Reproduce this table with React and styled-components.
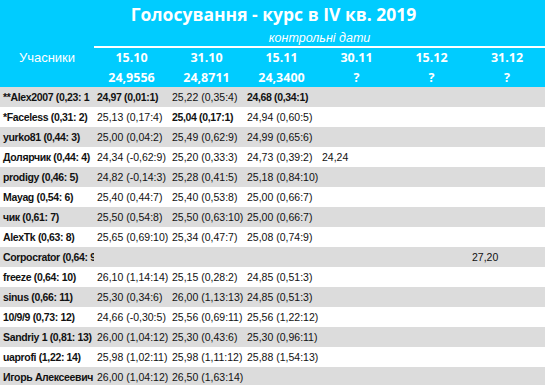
import React from "react";
import styled, { createGlobalStyle } from "styled-components";

const GlobalStyle = createGlobalStyle`
  body {
    margin: 0;
    background: #ffffff;
    font-family: "Liberation Sans", Arial, sans-serif;
  }
`;

const COLS = "94px repeat(5, 75px) 76px";

const Sheet = styled.div`
  width: 545px;
  height: 385px;
  overflow: hidden;
`;

const Header = styled.header`
  background: #00ccff;
  color: #ffffff;
`;

const Title = styled.h1`
  margin: 0;
  height: 28px;
  box-sizing: border-box;
  padding: 2px 0 0 2px;
  text-align: center;
  font-family: "Open Sans", sans-serif;
  font-weight: 700;
  font-size: 17.5px;
  line-height: 24px;
`;

const SubRow = styled.div`
  display: grid;
  grid-template-columns: 94px 1fr;
  height: 20px;
`;

const SubCaption = styled.div`
  border-bottom: 2px solid #ffffff;
  text-align: center;
  font-style: italic;
  font-size: 12.5px;
  line-height: 16px;
  padding-top: 2px;
`;

const HeadRow = styled.div`
  display: grid;
  grid-template-columns: ${COLS};
  height: ${(p) => p.$h}px;
  align-items: center;
`;

const HeadCell = styled.div`
  text-align: center;
  font-weight: ${(p) => (p.$regular ? 400 : 700)};
  font-size: ${(p) => (p.$regular ? 13 : 12.5)}px;
  font-family: ${(p) => (p.$regular ? '"Liberation Sans"' : '"Open Sans"')}, sans-serif;
`;

const Row = styled.div`
  display: grid;
  grid-template-columns: ${COLS};
  height: 20px;
  align-items: center;
  background: ${(p) => (p.$odd ? "#dcdcdc" : "#ffffff")};
`;

const Cell = styled.div`
  padding-left: 3px;
  white-space: nowrap;
  overflow: hidden;
  font-size: 10.5px;
  color: #111111;
  font-weight: ${(p) => (p.$bold ? 700 : 400)};
  letter-spacing: ${(p) => (p.$bold ? "-0.35px" : "0")};
`;

const dates = ["15.10", "31.10", "15.11", "30.11", "15.12", "31.12"];
const rates = ["24,9556", "24,8711", "24,3400", "?", "?", "?"];

// cells prefixed with "!" are the best guess of a column
const rows = [
  ["**Alex2007 (0,23: 1", "!24,97 (0,01:1)", "25,22 (0,35:4)", "!24,68 (0,34:1)"],
  ["*Faceless (0,31: 2)", "25,13 (0,17:4)", "!25,04 (0,17:1)", "24,94 (0,60:5)"],
  ["yurko81 (0,44: 3)", "25,00 (0,04:2)", "25,49 (0,62:9)", "24,99 (0,65:6)"],
  ["Долярчик (0,44: 4)", "24,34 (-0,62:9)", "25,20 (0,33:3)", "24,73 (0,39:2)", "24,24"],
  ["prodigy (0,46: 5)", "24,82 (-0,14:3)", "25,28 (0,41:5)", "25,18 (0,84:10)"],
  ["Mayag (0,54: 6)", "25,40 (0,44:7)", "25,40 (0,53:8)", "25,00 (0,66:7)"],
  ["чик (0,61: 7)", "25,50 (0,54:8)", "25,50 (0,63:10)", "25,00 (0,66:7)"],
  ["AlexTk (0,63: 8)", "25,65 (0,69:10)", "25,34 (0,47:7)", "25,08 (0,74:9)"],
  ["Corpocrator (0,64: 9", "", "", "", "", "", "27,20"],
  ["freeze (0,64: 10)", "26,10 (1,14:14)", "25,15 (0,28:2)", "24,85 (0,51:3)"],
  ["sinus (0,66: 11)", "25,30 (0,34:6)", "26,00 (1,13:13)", "24,85 (0,51:3)"],
  ["10/9/9 (0,73: 12)", "24,66 (-0,30:5)", "25,56 (0,69:11)", "25,56 (1,22:12)"],
  ["Sandriy 1 (0,81: 13)", "26,00 (1,04:12)", "25,30 (0,43:6)", "25,30 (0,96:11)"],
  ["uaprofi (1,22: 14)", "25,98 (1,02:11)", "25,98 (1,11:12)", "25,88 (1,54:13)"],
  ["Игорь Алексеевич (", "26,00 (1,04:12)", "26,50 (1,63:14)"],
];

export default function App() {
  return (
    <>
      <GlobalStyle />
      <Sheet>
        <Header>
          <Title>Голосування - курс в IV кв. 2019</Title>
          <SubRow>
            <div />
            <SubCaption>контрольні дати</SubCaption>
          </SubRow>
          <HeadRow $h={19}>
            <HeadCell $regular>Учасники</HeadCell>
            {dates.map((d) => (
              <HeadCell key={d}>{d}</HeadCell>
            ))}
          </HeadRow>
          <HeadRow $h={20}>
            <div />
            {rates.map((r, i) => (
              <HeadCell key={i}>{r}</HeadCell>
            ))}
          </HeadRow>
        </Header>
        {rows.map((r, i) => {
          const cells = [...r];
          while (cells.length < 7) cells.push("");
          return (
            <Row key={i} $odd={i % 2 === 0}>
              {cells.map((c, j) => {
                const best = c.startsWith("!");
                return (
                  <Cell key={j} $bold={j === 0 || best}>
                    {best ? c.slice(1) : c}
                  </Cell>
                );
              })}
            </Row>
          );
        })}
      </Sheet>
    </>
  );
}
